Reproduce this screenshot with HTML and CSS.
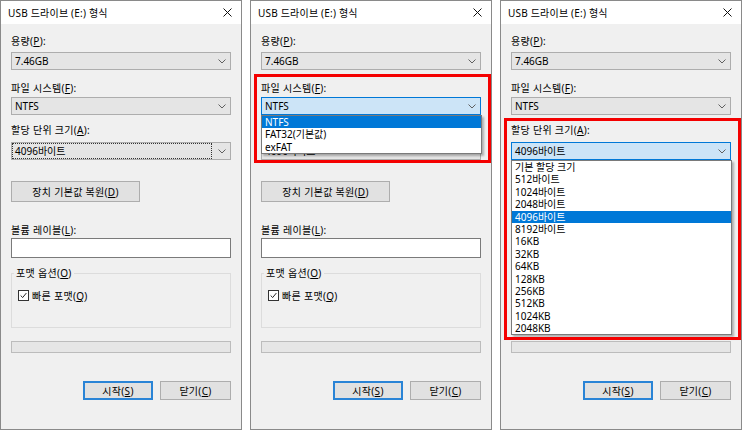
FILE: index.html
```html
<!DOCTYPE html>
<html lang="ko">
<head>
  <meta charset="UTF-8">
  <meta name="viewport" content="width=device-width, initial-scale=1.0">
  <title>USB 드라이브 (E:) 형식</title>
  <link rel="stylesheet" href="styles.css">
</head>
<body>
  <div class="screens">

    <!-- 1. 기본 화면 -->
    <div class="dialog">
      <div class="titlebar">
        <span>USB 드라이브 (E:) 형식</span>
        <svg class="close" viewBox="0 0 9 9"><path d="M0.5 0.5L8.5 8.5M8.5 0.5L0.5 8.5"/></svg>
      </div>
      <div class="content">
        <div class="label size-label">용량(<u>P</u>):</div>
        <div class="combo size-box"><span class="val">7.46GB</span><svg class="arrow" viewBox="0 0 8 5"><path d="M0.5 0.5L4 4L7.5 0.5"/></svg></div>
        <div class="label fs-label">파일 시스템(<u>F</u>):</div>
        <div class="combo fs-box"><span class="val">NTFS</span><svg class="arrow" viewBox="0 0 8 5"><path d="M0.5 0.5L4 4L7.5 0.5"/></svg></div>
        <div class="label unit-label">할당 단위 크기(<u>A</u>):</div>
        <div class="combo unit-box"><span class="val focus">4096바이트</span><svg class="arrow" viewBox="0 0 8 5"><path d="M0.5 0.5L4 4L7.5 0.5"/></svg></div>
        <button class="btn restore">장치 기본값 복원(<u>D</u>)</button>
        <div class="label vol-label">볼륨 레이블(<u>L</u>):</div>
        <input class="vol-input" type="text">
        <fieldset class="options">
          <legend>포맷 옵션(<u>O</u>)</legend>
          <label class="check"><span class="box"><svg viewBox="0 0 11 11"><path d="M2 5.5L4.5 8L9 2.5"/></svg></span><span>빠른 포맷(<u>Q</u>)</span></label>
        </fieldset>
        <div class="progress"></div>
        <div class="actions">
          <button class="btn start">시작(<u>S</u>)</button>
          <button class="btn close-btn">닫기(<u>C</u>)</button>
        </div>
      </div>
    </div>

    <!-- 2. 파일 시스템 목록 -->
    <div class="dialog">
      <div class="titlebar">
        <span>USB 드라이브 (E:) 형식</span>
        <svg class="close" viewBox="0 0 9 9"><path d="M0.5 0.5L8.5 8.5M8.5 0.5L0.5 8.5"/></svg>
      </div>
      <div class="content">
        <div class="label size-label">용량(<u>P</u>):</div>
        <div class="combo size-box"><span class="val">7.46GB</span><svg class="arrow" viewBox="0 0 8 5"><path d="M0.5 0.5L4 4L7.5 0.5"/></svg></div>
        <div class="label fs-label">파일 시스템(<u>F</u>):</div>
        <div class="combo fs-box open"><span class="val">NTFS</span><svg class="arrow" viewBox="0 0 8 5"><path d="M0.5 0.5L4 4L7.5 0.5"/></svg>
          <ul class="droplist">
            <li class="sel">NTFS</li>
            <li>FAT32(기본값)</li>
            <li>exFAT</li>
          </ul>
        </div>
        <div class="label unit-label">할당 단위 크기(<u>A</u>):</div>
        <div class="combo unit-box"><span class="val">4096바이트</span><svg class="arrow" viewBox="0 0 8 5"><path d="M0.5 0.5L4 4L7.5 0.5"/></svg></div>
        <button class="btn restore">장치 기본값 복원(<u>D</u>)</button>
        <div class="label vol-label">볼륨 레이블(<u>L</u>):</div>
        <input class="vol-input" type="text">
        <fieldset class="options">
          <legend>포맷 옵션(<u>O</u>)</legend>
          <label class="check"><span class="box"><svg viewBox="0 0 11 11"><path d="M2 5.5L4.5 8L9 2.5"/></svg></span><span>빠른 포맷(<u>Q</u>)</span></label>
        </fieldset>
        <div class="progress"></div>
        <div class="actions">
          <button class="btn start">시작(<u>S</u>)</button>
          <button class="btn close-btn">닫기(<u>C</u>)</button>
        </div>
      </div>
      <div class="mark mark-fs"></div>
    </div>

    <!-- 3. 할당 단위 목록 -->
    <div class="dialog">
      <div class="titlebar">
        <span>USB 드라이브 (E:) 형식</span>
        <svg class="close" viewBox="0 0 9 9"><path d="M0.5 0.5L8.5 8.5M8.5 0.5L0.5 8.5"/></svg>
      </div>
      <div class="content">
        <div class="label size-label">용량(<u>P</u>):</div>
        <div class="combo size-box"><span class="val">7.46GB</span><svg class="arrow" viewBox="0 0 8 5"><path d="M0.5 0.5L4 4L7.5 0.5"/></svg></div>
        <div class="label fs-label">파일 시스템(<u>F</u>):</div>
        <div class="combo fs-box"><span class="val">NTFS</span><svg class="arrow" viewBox="0 0 8 5"><path d="M0.5 0.5L4 4L7.5 0.5"/></svg></div>
        <div class="label unit-label">할당 단위 크기(<u>A</u>):</div>
        <div class="combo unit-box open"><span class="val">4096바이트</span><svg class="arrow" viewBox="0 0 8 5"><path d="M0.5 0.5L4 4L7.5 0.5"/></svg>
          <ul class="droplist">
            <li>기본 할당 크기</li>
            <li>512바이트</li>
            <li>1024바이트</li>
            <li>2048바이트</li>
            <li class="sel">4096바이트</li>
            <li>8192바이트</li>
            <li>16KB</li>
            <li>32KB</li>
            <li>64KB</li>
            <li>128KB</li>
            <li>256KB</li>
            <li>512KB</li>
            <li>1024KB</li>
            <li>2048KB</li>
          </ul>
        </div>
        <button class="btn restore">장치 기본값 복원(<u>D</u>)</button>
        <div class="label vol-label">볼륨 레이블(<u>L</u>):</div>
        <input class="vol-input" type="text">
        <fieldset class="options">
          <legend>포맷 옵션(<u>O</u>)</legend>
          <label class="check"><span class="box"><svg viewBox="0 0 11 11"><path d="M2 5.5L4.5 8L9 2.5"/></svg></span><span>빠른 포맷(<u>Q</u>)</span></label>
        </fieldset>
        <div class="progress"></div>
        <div class="actions">
          <button class="btn start">시작(<u>S</u>)</button>
          <button class="btn close-btn">닫기(<u>C</u>)</button>
        </div>
      </div>
      <div class="mark mark-unit"></div>
    </div>

  </div>
</body>
</html>
```

FILE: styles.css
```css
*,*::before,*::after{
  margin: 0;
  padding: 0;
  box-sizing: border-box;
}
body{
  background: #fff;
  font-family: "Noto Sans", "Noto Sans CJK KR", sans-serif;
  font-size: 10px;
  color: #000;
  overflow: hidden;
}
u{
  text-decoration: underline;
  text-underline-offset: 1px;
}

.screens{
  display: flex;
  gap: 8px;
}
.dialog{
  position: relative;
  width: 242px;
  height: 430px;
  border: 1px solid #8a8a8a;
  background: #f0f0f0;
  display: flex;
  flex-direction: column;
}
.titlebar{
  height: 23px;
  background: #fff;
  display: flex;
  align-items: center;
  justify-content: space-between;
  padding: 0 9px 0 7px;
  white-space: nowrap;
  letter-spacing: .2px;
}
.close{
  width: 9px;
  height: 9px;
}
.close path{
  stroke: #111;
  stroke-width: 1;
  fill: none;
}

.content{
  padding: 0 10px;
  display: flex;
  flex-direction: column;
}
.label{
  height: 14px;
  line-height: 14px;
  white-space: nowrap;
  letter-spacing: .3px;
}
.size-label{ margin-top: 10px; }
.fs-label{ margin-top: 11px; }
.unit-label{ margin-top: 8px; }
.vol-label{ margin-top: 21px; }

.combo{
  position: relative;
  height: 18px;
  border: 1px solid #adadad;
  background: #e5e5e5;
  display: flex;
  align-items: center;
}
.size-box{ margin-top: 4px; }
.fs-box{ margin-top: 2px; }
.unit-box{ margin-top: 5px; }
.combo.open{
  background: #cce4f7;
  border-color: #0078d7;
}
.combo .val{
  flex: 1;
  height: 14px;
  line-height: 14px;
  margin: 1px;
  padding-left: 2px;
  white-space: nowrap;
}
.combo .val.focus{
  outline: 1px dotted #333;
  outline-offset: 0;
}
.arrow{
  width: 8px;
  height: 5px;
  margin: 0 4px 0 6px;
}
.arrow path{
  fill: none;
  stroke: #606060;
  stroke-width: 1;
}

.droplist{
  position: absolute;
  top: calc(100% + 1px);
  left: -1px;
  right: -2px;
  list-style: none;
  background: #fff;
  border: 1px solid #7a7a7a;
  box-shadow: 2px 2px 2px rgba(0,0,0,.28);
  z-index: 2;
}
.droplist li{
  height: 12.4px;
  line-height: 12.4px;
  padding-left: 3px;
  white-space: nowrap;
}
.droplist li.sel{
  background: #0078d7;
  color: #fff;
}

.btn{
  font: inherit;
  color: #000;
  height: 21px;
  border: 1px solid #adadad;
  background: #e1e1e1;
  letter-spacing: .3px;
  cursor: pointer;
}
.restore{
  width: 129px;
  margin-top: 21px;
}

.vol-input{
  margin-top: 1px;
  height: 20px;
  width: 100%;
  border: 1px solid #7a7a7a;
  background: #fff;
  outline: none;
}

.options{
  margin-top: 8px;
  border: 1px solid #dcdcdc;
  padding: 9px 6px 25px;
  min-width: 0;
  letter-spacing: .3px;
}
.options legend{
  line-height: 14px;
  padding: 0 2px;
  margin-left: -4px;
}
.check{
  display: flex;
  align-items: center;
  gap: 3px;
  height: 13px;
  white-space: nowrap;
}
.check .box{
  width: 11px;
  height: 11px;
  border: 1px solid #333;
  background: #fff;
  display: flex;
}
.check .box svg{
  width: 9px;
  height: 9px;
}
.check .box path{
  fill: none;
  stroke: #222;
  stroke-width: 1.2;
}

.progress{
  margin-top: 13px;
  height: 12px;
  border: 1px solid #bcbcbc;
  background: #e6e6e6;
}

.actions{
  margin-top: 28px;
  display: flex;
  justify-content: flex-end;
  gap: 7px;
}
.actions .btn{
  height: 19px;
}
.start{
  width: 70px;
  border: 2px solid #2a84d6;
}
.close-btn{
  width: 71px;
}

/* 빨간 강조 박스 */
.mark{
  position: absolute;
  left: 3px;
  width: 237px;
  border: 3px solid #f40000;
  pointer-events: none;
  z-index: 3;
}
.mark-fs{
  top: 73px;
  height: 89px;
}
.mark-unit{
  top: 117px;
  height: 222px;
}
```
